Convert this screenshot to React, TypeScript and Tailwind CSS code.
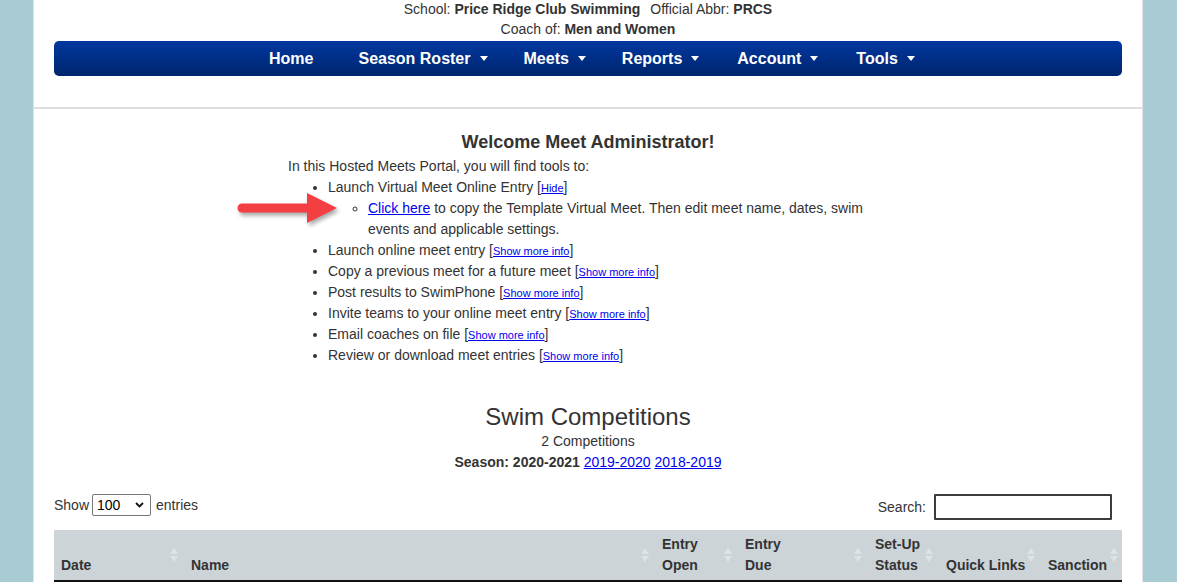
import React from "react";

const Caret = () => (
  <span className="ml-[9px] inline-block w-0 h-0 border-l-[4.5px] border-r-[4.5px] border-t-[5px] border-l-transparent border-r-transparent border-t-white align-middle" />
);

const SortIcon = () => (
  <svg width="8" height="14" viewBox="0 0 8 14" className="absolute right-[4px] top-1/2 -translate-y-1/2">
    <path d="M4 0 L8 6 L0 6 Z" fill="#dfe3e5" />
    <path d="M0 8 L8 8 L4 14 Z" fill="#dfe3e5" />
  </svg>
);

const More = ({ label = "Show more info" }: { label?: string }) => (
  <span>
    [<a href="#" className="text-[11px] leading-[11px] text-[#0000ee] underline">{label}</a>]
  </span>
);

export default function App() {
  const navItems: { n: string; cls: string }[] = [
    { n: "Season Roster", cls: "" },
    { n: "Meets", cls: "ml-[36px]" },
    { n: "Reports", cls: "ml-[36px]" },
    { n: "Account", cls: "ml-[38px]" },
    { n: "Tools", cls: "ml-[38px]" },
  ];
  const heads: { w: number; label: React.ReactNode; pl: number }[] = [
    { w: 128, label: "Date", pl: 7 },
    { w: 471, label: "Name", pl: 9 },
    { w: 83, label: (<>Entry<br />Open</>), pl: 9 },
    { w: 130, label: (<>Entry<br />Due</>), pl: 9 },
    { w: 71, label: (<>Set-Up<br />Status</>), pl: 9 },
    { w: 102, label: "Quick Links", pl: 9 },
    { w: 83, label: "Sanction", pl: 9 },
  ];
  return (
    <div className="min-h-screen bg-[#a9cbd3] font-['Liberation_Sans',Arial,sans-serif] text-[#333] text-[14px]">
      <div className="w-[1110px] ml-[33px] bg-white min-h-[582px] border-x border-[#e6e0e0] overflow-hidden">
        {/* top info */}
        <div className="px-[20px]">
          <div className="text-center leading-[19px]">
            School: <b>Price Ridge Club Swimming</b>
            <span className="ml-[10px]">Official Abbr: </span>
            <b>PRCS</b>
          </div>
          <div className="text-center leading-[21px]">
            Coach of: <b>Men and Women</b>
          </div>
          <nav className="mt-[1px] h-[35px] rounded-[5px] bg-linear-to-b from-[#0038a0] to-[#00256e] flex items-center justify-start pl-[215px] text-white font-bold text-[16px]">
            <span className="mr-[45px]">Home</span>
            {navItems.map((it) => (
              <span key={it.n} className={`flex items-center ${it.cls}`}>
                {it.n}
                <Caret />
              </span>
            ))}
          </nav>
        </div>
        <div className="mt-[31px] h-[2px] bg-[#dedede]" />

        <div className="px-[20px]">
          <h1 className="mt-[21px] text-center font-bold text-[18px] leading-[24px]">
            Welcome Meet Administrator!
          </h1>
          <div className="relative w-[600px] mx-auto mt-[2px] leading-[21px]">
            <div className="mt-[1px]">In this Hosted Meets Portal, you will find tools to:</div>
            <ul className="list-disc pl-10">
              <li>
                Launch Virtual Meet Online Entry <More label="Hide" />
                <ul className="list-[circle] pl-10">
                  <li>
                    <a href="#" className="text-[#0000ee] underline">Click here</a> to copy the Template Virtual Meet. Then edit meet name, dates, swim events and applicable settings.
                  </li>
                </ul>
              </li>
              <li>Launch online meet entry <More /></li>
              <li>Copy a previous meet for a future meet <More /></li>
              <li>Post results to SwimPhone <More /></li>
              <li>Invite teams to your online meet entry <More /></li>
              <li>Email coaches on file <More /></li>
              <li>Review or download meet entries <More /></li>
            </ul>
            <svg
              width="104"
              height="40"
              viewBox="0 0 104 40"
              className="absolute left-[-52px] top-[33px] drop-shadow-[2px_3px_2px_rgba(0,0,0,0.35)]"
            >
              <line x1="6" y1="19" x2="74" y2="19" stroke="#f43f42" strokeWidth="9" strokeLinecap="round" />
              <path d="M71 4 L101 19 L71 34 Z" fill="#f43f42" />
            </svg>
          </div>

          <h2 className="mt-[37px] text-center text-[24px] leading-[28px]">Swim Competitions</h2>
          <div className="text-center leading-[21px]">2 Competitions</div>
          <div className="text-center leading-[21px]">
            <b>Season: 2020-2021</b>{" "}
            <a href="#" className="text-[#0000ee] underline">2019-2020</a>{" "}
            <a href="#" className="text-[#0000ee] underline">2018-2019</a>
          </div>

          <div className="mt-[21px] flex items-start justify-between">
            <div className="h-[22px] flex items-center">
              <span>Show</span>
              <div className="ml-[3px] w-[59px] h-[22px] border border-[#767676] rounded-[2px] flex items-center justify-between pl-[4px] pr-[6px] text-[14px] text-black">
                <span>100</span>
                <svg width="9" height="6" viewBox="0 0 9 6">
                  <path d="M1 1 L4.5 4.5 L8 1" stroke="#111" strokeWidth="1.8" fill="none" />
                </svg>
              </div>
              <span className="ml-[5px]">entries</span>
            </div>
            <div className="h-[26px] flex items-center mr-[10px]">
              <span>Search:</span>
              <div className="ml-[8px] w-[178px] h-[26px] border-2 border-[#3c3c3c] rounded-[1px]" />
            </div>
          </div>

          <table className="mt-[10px] w-[1068px] table-fixed border-collapse">
            <colgroup>
              {heads.map((h, i) => (
                <col key={i} style={{ width: h.w }} />
              ))}
            </colgroup>
            <thead>
              <tr className="bg-[#ccd4d8]">
                {heads.map((h, i) => (
                  <th
                    key={i}
                    style={{ paddingLeft: h.pl }}
                    className="relative align-bottom text-left font-bold leading-[21px] pt-[4px] pb-[4px] border-b-2 border-[#111] whitespace-nowrap"
                  >
                    {h.label}
                    <SortIcon />
                  </th>
                ))}
              </tr>
            </thead>
          </table>
        </div>
      </div>
    </div>
  );
}
